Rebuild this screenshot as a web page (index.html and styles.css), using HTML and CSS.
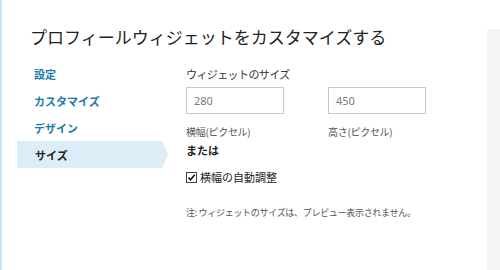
FILE: index.html
```html
<!DOCTYPE html>
<html>
<head>
  <meta charset="utf-8">
  <title>プロフィールウィジェット</title>
  <link rel="stylesheet" href="styles.css">
</head>
<body>
<div class="page">
  <div class="main">
    <h1 class="title">プロフィールウィジェットをカスタマイズする</h1>
    <div class="row">
      <ul class="nav">
        <li><a href="#">設定</a></li>
        <li><a href="#">カスタマイズ</a></li>
        <li><a href="#">デザイン</a></li>
        <li class="selected"><a href="#">サイズ</a></li>
      </ul>
      <div class="content">
        <div class="heading">ウィジェットのサイズ</div>
        <div class="fields">
          <div class="field">
            <input type="text" class="inputFields" value="280">
            <div class="hint">横幅(ピクセル)</div>
          </div>
          <div class="field">
            <input type="text" class="inputFields" value="450">
            <div class="hint">高さ(ピクセル)</div>
          </div>
        </div>
        <div class="or">または</div>
        <label class="check">
          <span class="box"><svg width="9" height="9" viewBox="0 0 9 9"><path d="M1.5 4.5 L3.5 6.8 L7.8 1.8" fill="none" stroke="#111" stroke-width="1.6"/></svg></span>
          横幅の自動調整
        </label>
        <div class="note">注: ウィジェットのサイズは、プレビュー表示されません。</div>
      </div>
    </div>
  </div>
  <div class="side"></div>
</div>
</body>
</html>
```

FILE: styles.css
```css
* {
  box-sizing: border-box;
}

body {
  margin: 0;
  font-family: "Noto Sans CJK JP", "Noto Sans", sans-serif;
  color: #222;
  background: white;
}

.page {
  display: flex;
  height: 270px;
  border-left: 2px solid #c6e3f2;
}

.main {
  flex: 1;
  padding-top: 24px;
}

/* Title */
.title {
  margin: 0 0 11px 28px;
  font-size: 17px;
  line-height: 25px;
  font-weight: normal;
  color: #222;
}

.row {
  display: flex;
}

/* Left nav */
.nav {
  list-style: none;
  margin: 0 0 0 15px;
  padding: 0;
  width: 151px;
}

.nav li {
  height: 27px;
  display: flex;
  align-items: center;
  padding-left: 17px;
}

.nav a {
  font-size: 11px;
  font-weight: bold;
  color: #1c78a8;
  text-decoration: none;
}

.nav li.selected {
  background: #dcedf7;
  clip-path: polygon(0 0, calc(100% - 6px) 0, 100% 50%, calc(100% - 6px) 100%, 0 100%);
}

.nav li.selected a {
  color: #222;
  padding-left: 1px;
}

/* Right content */
.content {
  padding-left: 18px;
}

.heading {
  margin-top: 7px;
  font-size: 11px;
  line-height: 14px;
  color: #333;
  letter-spacing: -0.6px;
}

.fields {
  display: flex;
  margin-top: 5px;
}

.field {
  width: 142px;
}

.inputFields {
  width: 98px;
  height: 27px;
  border: 1px solid #c8c8c8;
  padding: 0 7px;
  font-family: "Noto Sans", sans-serif;
  font-size: 11px;
  color: #7a7a80;
  outline: none;
}

.hint {
  margin-top: 11px;
  font-size: 10px;
  line-height: 14px;
  color: #555;
  letter-spacing: -0.3px;
}

.or {
  margin-top: 4px;
  font-size: 11px;
  line-height: 14px;
  font-weight: bold;
  color: #222;
}

.check {
  display: flex;
  align-items: center;
  margin-top: 13px;
  font-size: 11px;
  line-height: 14px;
  color: #222;
}

.box {
  width: 11px;
  height: 11px;
  border: 1px solid #444;
  display: flex;
  align-items: center;
  justify-content: center;
  margin-right: 3px;
  background: white;
}

.note {
  margin-top: 22px;
  font-size: 9px;
  line-height: 14px;
  color: #555;
  letter-spacing: -0.3px;
}

/* Right gray panel */
.side {
  width: 13px;
  margin-top: 29px;
  background: #f4f4f4;
}
```
